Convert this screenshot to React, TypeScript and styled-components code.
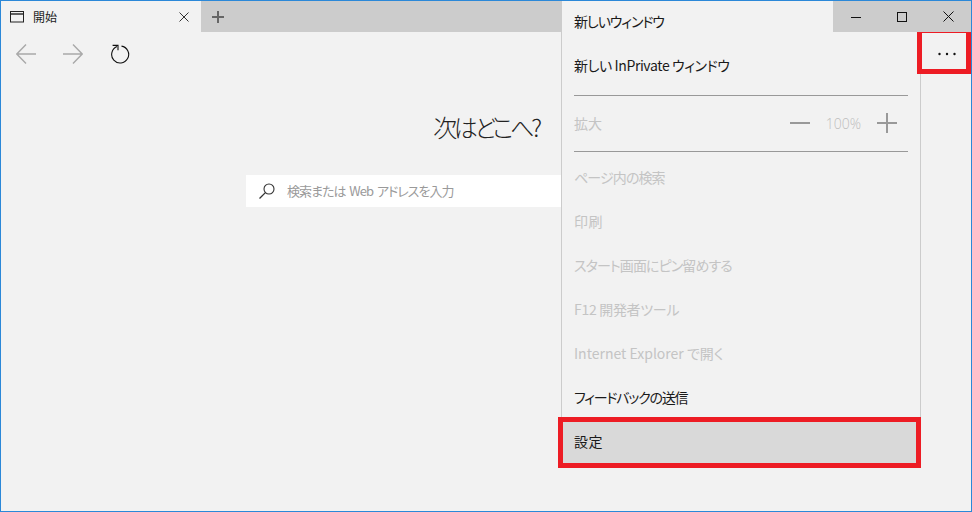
import React from 'react';
import styled, { createGlobalStyle } from 'styled-components';

const GlobalStyle = createGlobalStyle`
  html, body {
    margin: 0;
    padding: 0;
    background: #f2f2f2;
  }
  body {
    font-family: "Noto Sans CJK JP", "Noto Sans", sans-serif;
    font-feature-settings: "palt";
  }
`;

const Window = styled.div`
  position: relative;
  box-sizing: border-box;
  width: 972px;
  height: 512px;
  overflow: hidden;
  display: flex;
  flex-direction: column;
  background: #f2f2f2;
  border: 1px solid #2b88d8;
`;

const TabBar = styled.div`
  height: 31px;
  display: flex;
  background: #cccccc;
  flex: none;
`;

const Tab = styled.div`
  width: 200px;
  display: flex;
  align-items: center;
  padding: 0 12px 0 9px;
  box-sizing: border-box;
  background: #f2f2f2;
  font-size: 12px;
  color: #222;
`;

const TabTitle = styled.span`
  margin-left: 9px;
  flex: 1;
`;

const NewTab = styled.div`
  width: 34px;
  display: flex;
  align-items: center;
  justify-content: center;
`;

const Spacer = styled.div`
  flex: 1;
`;

const WindowControls = styled.div`
  position: relative;
  z-index: 1;
  display: flex;
  background: #cccccc;
`;

const WindowButton = styled.div`
  width: 46px;
  display: flex;
  align-items: center;
  justify-content: center;
`;

const NavBar = styled.div`
  height: 44px;
  display: flex;
  align-items: center;
  padding-left: 13px;
  gap: 23px;
  flex: none;
`;

const NavButton = styled.div`
  width: 24px;
  height: 24px;
  display: flex;
  align-items: center;
  justify-content: center;
`;

const Content = styled.main`
  display: flex;
  flex-direction: column;
  align-items: center;
  padding-top: 33px;
`;

const Heading = styled.h1`
  margin: 0;
  font-size: 24px;
  font-weight: 300;
  line-height: 36px;
  letter-spacing: -3.3px;
  color: #222;
`;

const SearchBox = styled.div`
  margin-top: 30px;
  width: 480px;
  height: 32px;
  box-sizing: border-box;
  background: #fff;
  display: flex;
  align-items: center;
  padding-left: 13px;
  gap: 12px;
  font-size: 13px;
  color: #9a9a9a;
`;

const SearchHint = styled.span`
  letter-spacing: -1px;
  word-spacing: 2px;
  margin-bottom: 2px;
`;

const Menu = styled.nav`
  position: absolute;
  top: -1px;
  left: 560px;
  width: 358px;
  height: 465px;
  background: #f2f2f2;
  border-left: 1px solid #cccccc;
  border-right: 1px solid #cccccc;
  display: flex;
  flex-direction: column;
`;

const MenuItem = styled.div<{ $disabled?: boolean; $active?: boolean; $track?: number }>`
  height: 44px;
  flex: none;
  display: flex;
  align-items: center;
  padding: 0 12px 2px;
  box-sizing: border-box;
  font-size: 14px;
  letter-spacing: ${p => p.$track ?? 0}px;
  color: ${p => (p.$disabled ? '#c4c4c4' : '#1a1a1a')};
  background: ${p => (p.$active ? '#d9d9d9' : 'transparent')};
`;

const Divider = styled.div<{ $after?: boolean }>`
  height: 1px;
  margin: ${p => (p.$after ? '0 12px 4px' : '7px 12px 0')};
  background: #999999;
  flex: none;
`;

const ZoomRow = styled.div`
  height: 55px;
  flex: none;
  display: flex;
  align-items: center;
  padding: 0 23px 2px 12px;
  box-sizing: border-box;
  font-size: 14px;
  color: #c4c4c4;
`;

const ZoomControls = styled.div`
  margin-left: auto;
  padding-top: 1px;
  display: flex;
  align-items: center;
  gap: 16px;
  font-family: "Open Sans", "Noto Sans", sans-serif;
  font-size: 14px;
  font-weight: 300;
  color: #bdbdbd;
`;

const Highlight = styled.div`
  position: absolute;
  box-sizing: border-box;
  border: 5px solid #ed1c24;
`;

const MoreHighlight = styled(Highlight)`
  top: 27px;
  left: 916px;
  width: 54px;
  height: 46px;
  padding: 6px 0 0 6px;
  display: flex;
  align-items: center;
  justify-content: center;
`;

const SettingsHighlight = styled(Highlight)`
  top: 416px;
  left: 557px;
  width: 363px;
  height: 51px;
`;

const TabIcon = () => (
  <svg width="14" height="12" viewBox="0 0 14 12" fill="none" stroke="#222" strokeWidth="1">
    <rect x="0.5" y="0.5" width="13" height="10.5" />
    <path d="M0 3h14" strokeWidth="1.4" />
  </svg>
);

const CloseIcon = ({ size, color }: { size: number; color: string }) => (
  <svg width={size} height={size} viewBox={`0 0 ${size} ${size}`} stroke={color} strokeWidth="1" fill="none">
    <path d={`M0.5 0.5L${size - 0.5} ${size - 0.5}M${size - 0.5} 0.5L0.5 ${size - 0.5}`} />
  </svg>
);

const PlusIcon = ({ size, color, weight = 2 }: { size: number; color: string; weight?: number }) => (
  <svg width={size} height={size} viewBox={`0 0 ${size} ${size}`} stroke={color} strokeWidth={weight} fill="none">
    <path d={`M0 ${size / 2}H${size}M${size / 2} 0V${size}`} />
  </svg>
);

const ArrowIcon = ({ flip }: { flip?: boolean }) => (
  <svg width="20" height="20" viewBox="0 0 20 20" fill="none" stroke="#a9a9a9" strokeWidth="1.4"
       style={flip ? { transform: 'scaleX(-1)' } : undefined}>
    <path d="M0.5 10H20M10 0.5L0.8 10L10 19.5" />
  </svg>
);

const RefreshIcon = () => (
  <svg width="20" height="20" viewBox="0 0 20 20" fill="none" stroke="#111" strokeWidth="1.1">
    <path d="M7 2.6A8.5 8.5 0 1 0 11.5 2.1" />
    <path d="M2.6 1.4H8V6.2" />
  </svg>
);

const SearchIcon = () => (
  <svg width="16" height="16" viewBox="0 0 16 16" fill="none" stroke="#333" strokeWidth="1.1">
    <circle cx="10" cy="6" r="5" />
    <path d="M6.4 9.6L0.5 15.5" strokeWidth="1.3" />
  </svg>
);

const MinimizeIcon = () => (
  <svg width="10" height="10" viewBox="0 0 10 10" stroke="#111" fill="none">
    <path d="M0 5.5H10" />
  </svg>
);

const MaximizeIcon = () => (
  <svg width="10" height="10" viewBox="0 0 10 10" stroke="#111" fill="none">
    <rect x="0.5" y="0.5" width="9" height="9" />
  </svg>
);

const MoreIcon = () => (
  <svg width="18" height="4" viewBox="0 0 18 4" fill="#111">
    <circle cx="1.5" cy="2" r="1.2" />
    <circle cx="9" cy="2" r="1.2" />
    <circle cx="16.5" cy="2" r="1.2" />
  </svg>
);

const App: React.FC = () => (
  <>
    <GlobalStyle />
    <Window>
      <TabBar>
        <Tab>
          <TabIcon />
          <TabTitle>開始</TabTitle>
          <CloseIcon size={10} color="#333" />
        </Tab>
        <NewTab>
          <PlusIcon size={12} color="#666" />
        </NewTab>
        <Spacer />
        <WindowControls>
          <WindowButton><MinimizeIcon /></WindowButton>
          <WindowButton><MaximizeIcon /></WindowButton>
          <WindowButton><CloseIcon size={11} color="#111" /></WindowButton>
        </WindowControls>
      </TabBar>
      <NavBar>
        <NavButton><ArrowIcon /></NavButton>
        <NavButton><ArrowIcon flip /></NavButton>
        <NavButton><RefreshIcon /></NavButton>
      </NavBar>
      <Content>
        <Heading>次はどこへ?</Heading>
        <SearchBox>
          <SearchIcon />
          <SearchHint>検索または Web アドレスを入力</SearchHint>
        </SearchBox>
      </Content>
      <Menu>
        <MenuItem $track={-1.1}>新しいウィンドウ</MenuItem>
        <MenuItem $track={-0.4}>新しい InPrivate ウィンドウ</MenuItem>
        <Divider />
        <ZoomRow>
          拡大
          <ZoomControls>
            <svg width="20" height="2" viewBox="0 0 20 2" fill="#999"><rect width="20" height="2" /></svg>
            100%
            <PlusIcon size={20} color="#999" />
          </ZoomControls>
        </ZoomRow>
        <Divider $after />
        <MenuItem $disabled $track={-0.9}>ページ内の検索</MenuItem>
        <MenuItem $disabled $track={0.4}>印刷</MenuItem>
        <MenuItem $disabled $track={-0.9}>スタート画面にピン留めする</MenuItem>
        <MenuItem $disabled $track={-0.3}>F12 開発者ツール</MenuItem>
        <MenuItem $disabled>Internet Explorer で開く</MenuItem>
        <MenuItem $track={-1.2}>フィードバックの送信</MenuItem>
        <MenuItem $active $track={0.5}>設定</MenuItem>
      </Menu>
      <MoreHighlight><MoreIcon /></MoreHighlight>
      <SettingsHighlight />
    </Window>
  </>
);

export default App;
